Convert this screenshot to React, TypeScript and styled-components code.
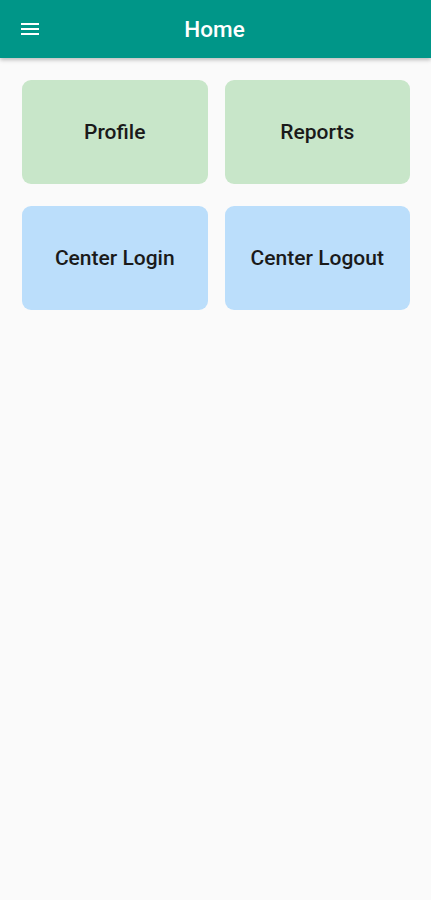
import React from "react";
import styled, { createGlobalStyle } from "styled-components";

interface Tile {
    id: number;
    label: string;
    tone: "green" | "blue";
}

const tiles: Tile[] = [
    { id: 1, label: "Profile", tone: "green" },
    { id: 2, label: "Reports", tone: "green" },
    { id: 3, label: "Center Login", tone: "blue" },
    { id: 4, label: "Center Logout", tone: "blue" },
];

const App: React.FC = () => {
    return (
        <>
            <GlobalStyle />
            <Page>
                <AppBar>
                    <MenuButton aria-label="menu">
                        <svg width="24" height="24" viewBox="0 0 24 24" fill="#ffffff">
                            <path d="M3 18h18v-2H3v2zm0-5h18v-2H3v2zm0-7v2h18V6H3z" />
                        </svg>
                    </MenuButton>
                    <Title>Home</Title>
                    <Spacer />
                </AppBar>
                <Grid>
                    {tiles.map((tile) => (
                        <Card key={tile.id} tone={tile.tone}>
                            {tile.label}
                        </Card>
                    ))}
                </Grid>
            </Page>
        </>
    );
};

export default App;

// styles
const GlobalStyle = createGlobalStyle`
    html, body {
        margin: 0;
        padding: 0;
        background-color: #fafafa;
        font-family: Roboto, "Noto Sans", sans-serif;
    }
`;

const Page = styled.div`
    min-height: 900px;
    background-color: #fafafa;
`;

const AppBar = styled.header`
    height: 58px;
    background-color: #009688;
    display: flex;
    align-items: center;
    padding: 0 20px 0 18px;
    box-shadow: 0 2px 4px rgba(0, 0, 0, 0.25);
    position: relative;
`;

const MenuButton = styled.button`
    width: 24px;
    height: 24px;
    padding: 0;
    border: none;
    background: transparent;
    display: flex;
    align-items: center;
    justify-content: center;
    cursor: pointer;
`;

const Title = styled.h1`
    flex: 1;
    margin: 0;
    text-align: center;
    color: #ffffff;
    font-size: 22.5px;
    font-weight: 500;
`;

const Spacer = styled.div`
    width: 24px;
`;

const Grid = styled.main`
    display: grid;
    grid-template-columns: 1fr 1fr;
    column-gap: 17px;
    row-gap: 22px;
    padding: 22px 21px 22px 22px;
`;

const Card = styled.div<{ tone: "green" | "blue" }>`
    height: 104px;
    border-radius: 9px;
    background-color: ${(props) => (props.tone === "green" ? "#c8e6c9" : "#bbdefb")};
    display: flex;
    align-items: center;
    justify-content: center;
    color: #1a1a1a;
    font-size: 21px;
    font-weight: 500;
    cursor: pointer;
`;
